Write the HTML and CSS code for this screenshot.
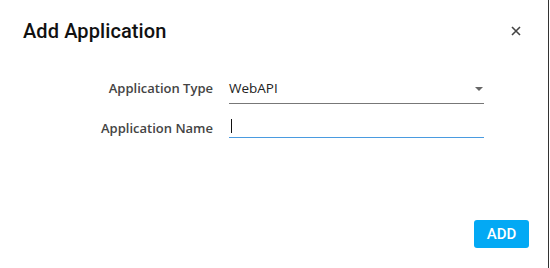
FILE: index.html
```html
<!DOCTYPE html>
<html>
<head>
<meta charset="utf-8">
<link rel="stylesheet" href="styles.css">
</head>
<body>
<div class="dialog">
  <div class="header">
    <h1 class="title">Add Application</h1>
    <button class="close" aria-label="Close">
      <svg width="10" height="10" viewBox="0 0 10 10"><path d="M1 1L9 9M9 1L1 9" stroke="#444" stroke-width="1.6" fill="none"/></svg>
    </button>
  </div>
  <div class="form">
    <div class="row row-select">
      <label class="label">Application Type</label>
      <div class="field select">
        <span class="value">WebAPI</span>
        <span class="caret"></span>
      </div>
    </div>
    <div class="row row-input">
      <label class="label">Application Name</label>
      <div class="field input"><span class="cursor"></span></div>
    </div>
  </div>
  <div class="footer">
    <button class="add">ADD</button>
  </div>
</div>
</body>
</html>
```
FILE: styles.css
```css
html, body {
  margin: 0;
  padding: 0;
  background: #fff;
}
.dialog {
  width: 548px;
  height: 268px;
  border-right: 1px solid #333;
  box-sizing: content-box;
  display: flex;
  flex-direction: column;
  font-family: "Open Sans", "Noto Sans", sans-serif;
}
.header {
  display: flex;
  align-items: center;
  justify-content: space-between;
  padding: 17px 26px 0 23px;
  height: 28px;
}
.title {
  margin: 0;
  font-family: Roboto, sans-serif;
  font-weight: 500;
  font-size: 20px;
  color: #111;
  letter-spacing: 0.1px;
}
.close {
  border: 0;
  background: none;
  padding: 0;
  width: 12px;
  height: 12px;
  display: flex;
  align-items: center;
  justify-content: center;
}
.form {
  margin-top: 31px;
  display: flex;
  flex-direction: column;
  gap: 12px;
}
.row {
  display: flex;
}
.row-select {
  align-items: flex-start;
}
.row-input {
  align-items: center;
}
.label {
  width: 229px;
  flex: none;
  text-align: right;
  padding-right: 16px;
  box-sizing: border-box;
  font-size: 13px;
  line-height: 24px;
  font-weight: 600;
  color: #444;
}
.field {
  width: 255px;
  box-sizing: border-box;
  display: flex;
  position: relative;
}
.select {
  border-bottom: 1px solid #777;
  height: 28px;
  align-items: flex-start;
  justify-content: space-between;
}
.value {
  font-size: 13.5px;
  line-height: 24px;
  color: #222;
}
.caret {
  width: 0;
  height: 0;
  border-left: 4px solid transparent;
  border-right: 4px solid transparent;
  border-top: 4px solid #666;
  margin-right: 1px;
  margin-top: 11px;
}
.input {
  border-bottom: 1px solid #4a9be0;
  height: 20px;
  align-items: flex-start;
}
.cursor {
  width: 1px;
  height: 14px;
  background: #111;
  margin-left: 2px;
  margin-top: 1px;
}
.footer {
  margin-top: auto;
  display: flex;
  justify-content: flex-end;
  padding: 0 19px 20px 0;
}
.add {
  width: 55px;
  height: 28px;
  border: 0;
  border-radius: 3px;
  background: #03a9f4;
  color: #fff;
  font-family: Roboto, sans-serif;
  font-weight: 500;
  font-size: 15px;
  padding: 0;
}
```
